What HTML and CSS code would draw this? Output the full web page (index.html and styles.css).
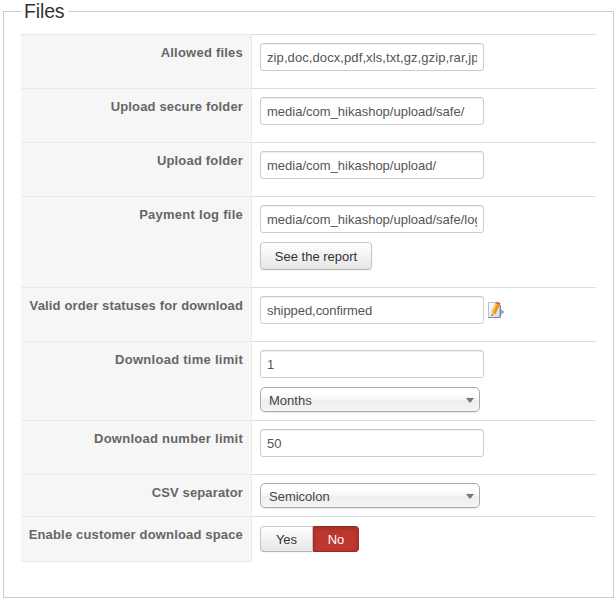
FILE: index.html
```html
<!DOCTYPE html>
<html lang="en">
<head>
<meta charset="utf-8">
<title>Files</title>
<link rel="stylesheet" href="styles.css">
</head>
<body>
<fieldset class="panel">
  <legend><span class="legend-text">Files</span></legend>
  <div class="settings">
    <div class="row"><label class="key k-allowed">Allowed files</label><div class="value"><div class="input"><span class="text t-allowed">zip,doc,docx,pdf,xls,txt,gz,gzip,rar,jpg</span></div></div></div>
    <div class="row"><label class="key k-secure">Upload secure folder</label><div class="value"><div class="input"><span class="text">media/com_hikashop/upload/safe/</span></div></div></div>
    <div class="row"><label class="key k-upload">Upload folder</label><div class="value"><div class="input"><span class="text">media/com_hikashop/upload/</span></div></div></div>
    <div class="row row-log"><label class="key k-log">Payment log file</label><div class="value"><div class="input"><span class="text">media/com_hikashop/upload/safe/logs</span></div><button class="btn report" type="button">See the report</button></div></div>
    <div class="row"><label class="key k-status">Valid order statuses for download</label><div class="value inline"><div class="input"><span class="text t-status">shipped,confirmed</span></div>
      <svg class="edit" width="16" height="16" viewBox="0 0 16 16">
        <defs><linearGradient id="page" x1="0" y1="0" x2="1" y2="1"><stop offset="0" stop-color="#fff"/><stop offset="1" stop-color="#cbd9ef"/></linearGradient></defs>
        <path d="M12 7h1.5v1.2h1.2l1.3 1.3v1l-1.3 1.3h-1.2V13H12z" fill="#a5adb5"/>
        <path d="M.5.5h11v15H.5z" fill="url(#page)" stroke="#b3c0d6"/>
        <path d="M.5 15.5h12V3" fill="none" stroke="#7d899f"/>
        <path d="M7.6 1.2l4.2 1.7-4.3 9-3.8 2 .2-4.3z" fill="#f58f0c"/>
        <path d="M7.6 1.2l1.7.7-4 8.8-1.4-.9z" fill="#ffc93a"/>
        <path d="M7.6 1.2L8.2 0l4.2 1.6-.6 1.3z" fill="#c9602a"/>
        <path d="M3.9 9.8l3.5 2.1-3.7 2z" fill="#f0cfa0"/>
        <path d="M3.8 12.1l1.3.8-1.4.9z" fill="#4a3c35"/>
      </svg></div></div>
    <div class="row row-time"><label class="key k-time">Download time limit</label><div class="value"><div class="input"><span class="text">1</span></div><div class="select"><span>Months</span><i class="arrow"></i></div></div></div>
    <div class="row"><label class="key k-number">Download number limit</label><div class="value"><div class="input"><span class="text">50</span></div></div></div>
    <div class="row row-csv"><label class="key k-csv">CSV separator</label><div class="value"><div class="select"><span>Semicolon</span><i class="arrow"></i></div></div></div>
    <div class="row row-space"><label class="key k-space">Enable customer download space</label><div class="value switch"><button class="btn yes" type="button">Yes</button><button class="btn no" type="button">No</button></div></div>
  </div>
</fieldset>
</body>
</html>
```
FILE: styles.css
```css
* { box-sizing: border-box; }
body {
  margin: 0;
  background: #fff;
  color: #333;
  font: 13px/18px "Liberation Sans", Arial, sans-serif;
}
.panel {
  width: 611px;
  height: 596px;
  margin: 2px 0 0 3px;
  padding: 0 17px;
  border: 1px solid #ccc;
}
legend {
  height: 19px;
  width: 47px;
  padding: 0 3px;
  font-size: 19.5px;
  letter-spacing: -.15px;
  line-height: 19px;
  white-space: nowrap;
}
.settings { margin-top: 13px; }
.row {
  display: grid;
  grid-template-columns: 231px 344px;
  height: 54px;
}
.row-log { height: 91px; }
.row-time { height: 79px; }
.row-csv { height: 42px; }
.row-space { height: 46px; }
.key {
  padding: 9px 8px 0 0;
  border-top: 1px solid #e9e9e9;
  border-right: 1px solid #e9e9e9;
  background: #f6f6f6;
  color: #666;
  font-weight: bold;
  text-align: right;
  white-space: nowrap;
}
.row-space .key { border-bottom: 1px solid #e9e9e9; }
.k-allowed { letter-spacing: .22px; }
.k-secure { letter-spacing: .15px; }
.k-upload { letter-spacing: .18px; }
.k-log { letter-spacing: .26px; }
.k-status { letter-spacing: .14px; }
.k-time { letter-spacing: .27px; }
.k-number { letter-spacing: .25px; }
.k-csv { letter-spacing: .13px; }
.k-space { letter-spacing: .16px; }
.value {
  padding: 8px 0 0 8px;
  border-top: 1px solid #ddd;
}
.inline { display: flex; gap: 4px; }
.input {
  width: 224px;
  height: 28px;
  padding: 5px 6px;
  border: 1px solid #ccc;
  border-radius: 3px;
  background: #fff;
  box-shadow: inset 0 1px 1px rgba(0, 0, 0, .075);
  color: #555;
}
.text { display: block; overflow: hidden; white-space: nowrap; }
.t-allowed { letter-spacing: .09px; }
.t-status { letter-spacing: -.06px; }
.edit { margin-top: 6px; }
.btn {
  display: block;
  padding: 1px 0 0;
  border: 1px solid #bbb;
  border-color: #c9c9c9 #c5c5c5 #b3b3b3;
  border-radius: 4px;
  background: linear-gradient(#fff, #e6e6e6);
  box-shadow: inset 0 1px 0 rgba(255, 255, 255, .2), 0 1px 2px rgba(0, 0, 0, .05);
  color: #333;
  font: inherit;
  text-align: center;
  white-space: nowrap;
}
.report { width: 112px; height: 28px; margin-top: 9px; }
.select {
  display: flex;
  align-items: center;
  justify-content: space-between;
  width: 220px;
  height: 25px;
  padding: 2px 5px 0 8px;
  border: 1px solid #aaa;
  border-radius: 5px;
  background: linear-gradient(#fff 20%, #f6f6f6 50%, #eee 52%, #f4f4f4 100%);
  box-shadow: inset 0 0 3px #fff, 0 1px 1px rgba(0, 0, 0, .1);
  color: #444;
}
.input + .select { margin-top: 9px; }
.arrow {
  margin-bottom: 1px;
  border: 4px solid transparent;
  border-top: 5px solid #777;
  border-bottom: 0;
}
.switch { display: flex; padding-top: 9px; }
.yes { width: 53px; height: 26px; border-radius: 4px 0 0 4px; }
.no {
  width: 46px;
  height: 26px;
  border-color: #942a25 #a52c27 #942a25;
  border-radius: 0 4px 4px 0;
  background: #bd362f;
  box-shadow: inset 0 2px 4px rgba(0, 0, 0, .15);
  color: #fff;
}
```
